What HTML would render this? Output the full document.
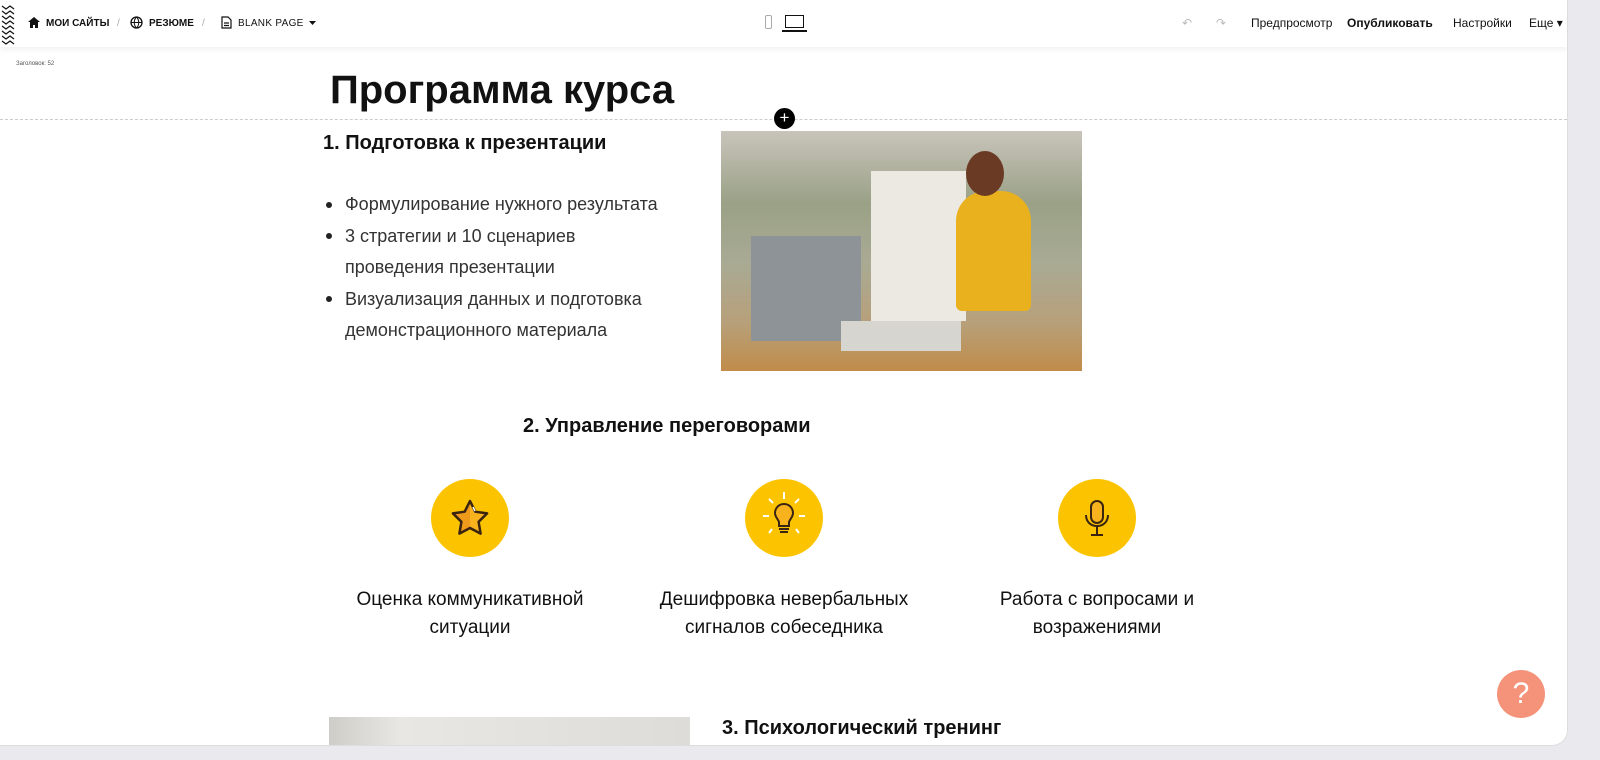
<!DOCTYPE html>
<html><head><meta charset="utf-8"><style>
*{margin:0;padding:0;box-sizing:border-box}
body{width:1600px;height:760px;background:#e9e9ee;font-family:"Liberation Sans","DejaVu Sans",sans-serif;color:#111;overflow:hidden;position:relative}
.frame{position:absolute;left:0;top:0;width:1568px;height:746px;background:#fff;border-radius:0 0 16px 0;border-right:1px solid #ddd;border-bottom:1px solid #ddd;overflow:hidden}
.top{position:absolute;left:0;top:0;width:100%;height:47px;background:#fff;box-shadow:0 2px 6px rgba(0,0,0,.07);z-index:5}
.t{position:absolute;font-size:10px;top:18px;white-space:nowrap}
.r{position:absolute;font-size:12px;top:16px;white-space:nowrap}
.abs{position:absolute;white-space:nowrap}
.circle{position:absolute;width:78px;height:78px;border-radius:50%;background:#fcc400}
.cap{position:absolute;width:300px;text-align:center;font-size:19px;line-height:28px;color:#111}
</style></head><body>
<div class="frame">
<div class="top">
 <svg class="abs" style="left:0;top:2px" width="18" height="44"><path d="M2 4l4 3 4-3 4 3M2 9l4 3 4-3 4 3M2 14l4 3 4-3 4 3M2 19l4 3 4-3 4 3M2 24l4 3 4-3 4 3M2 29l4 3 4-3 4 3M2 34l4 3 4-3 4 3M2 39l4 3 4-3 4 3" stroke="#111" fill="none" stroke-width="1.2"/></svg>
 <svg class="abs" style="left:28px;top:17px" width="12" height="11"><path d="M6 0L0 5h2v6h3V8h2v3h3V5h2z" fill="#111"/></svg>
 <div class="t" style="left:46px;font-weight:bold">МОИ САЙТЫ</div>
 <div class="t" style="left:117px;color:#aaa">/</div>
 <svg class="abs" style="left:130px;top:16px" width="13" height="13"><circle cx="6.5" cy="6.5" r="5.5" fill="none" stroke="#111" stroke-width="1.3"/><path d="M1 6.5h11M6.5 1c-3 3-3 8 0 11M6.5 1c3 3 3 8 0 11" stroke="#111" fill="none"/></svg>
 <div class="t" style="left:149px;font-weight:bold">РЕЗЮМЕ</div>
 <div class="t" style="left:202px;color:#aaa">/</div>
 <svg class="abs" style="left:221px;top:16px" width="11" height="13"><path d="M1 1h6l3 3v8H1z M3 7h5M3 9.5h5" stroke="#111" fill="none" stroke-width="1.2"/></svg>
 <div class="t" style="left:238px;letter-spacing:.3px">BLANK PAGE</div>
 <svg class="abs" style="left:309px;top:21px" width="7" height="4"><path d="M0 0h7L3.5 4z" fill="#111"/></svg>
 <div class="abs" style="left:765px;top:15px;width:7px;height:14px;border:1px solid #aaa;border-radius:2px"></div>
 <div class="abs" style="left:785px;top:15px;width:19px;height:13px;border:1.5px solid #111"></div>
 <div class="abs" style="left:782px;top:30px;width:25px;height:1.5px;background:#111"></div>
 <div class="r" style="left:1182px;color:#bbb">↶</div>
 <div class="r" style="left:1216px;color:#bbb">↷</div>
 <div class="r" style="left:1251px">Предпросмотр</div>
 <div class="r" style="left:1347px;font-weight:bold">Опубликовать</div>
 <div class="r" style="left:1453px">Настройки</div>
 <div class="r" style="left:1529px">Еще ▾</div>
</div>
<div class="abs" style="left:16px;top:61px;font-size:6px;color:#555">Заголовок: 52</div>
<div class="abs" style="left:0;top:119px;width:100%;border-top:1px dashed #ccc"></div>
<div class="abs" style="left:330px;top:68px;font-size:40px;font-weight:bold">Программа курса</div>
<div class="abs" style="left:774px;top:108px;width:21px;height:21px;border-radius:50%;background:#000;color:#fff;text-align:center;font-size:17px;line-height:20px">+</div>
<div class="abs" style="left:323px;top:132px;font-size:20px;font-weight:bold">1. Подготовка к презентации</div>
<div class="abs" style="left:345px;top:189px;font-size:18px;line-height:31.5px;color:#333">
 <div>Формулирование нужного результата</div>
 <div>3 стратегии и 10 сценариев<br>проведения презентации</div>
 <div>Визуализация данных и подготовка<br>демонстрационного материала</div>
</div>
<div class="abs" style="left:326px;top:202px;width:6px;height:6px;border-radius:50%;background:#222"></div>
<div class="abs" style="left:326px;top:233px;width:6px;height:6px;border-radius:50%;background:#222"></div>
<div class="abs" style="left:326px;top:296px;width:6px;height:6px;border-radius:50%;background:#222"></div>
<div class="abs" style="left:721px;top:131px;width:361px;height:240px;background:linear-gradient(180deg,#c9c4bb 0%,#9aa186 30%,#a9aa94 55%,#b7a07a 80%,#c08c4a 100%)">
 <div class="abs" style="left:30px;top:105px;width:110px;height:105px;background:#8d9396"></div>
 <div class="abs" style="left:150px;top:40px;width:95px;height:150px;background:#ebe9e2"></div>
 <div class="abs" style="left:235px;top:60px;width:75px;height:120px;background:#eab11f;border-radius:30px 30px 6px 6px"></div>
 <div class="abs" style="left:245px;top:20px;width:38px;height:45px;background:#6b3a24;border-radius:50%"></div>
 <div class="abs" style="left:120px;top:190px;width:120px;height:30px;background:#d7d5d0"></div>
</div>
<div class="abs" style="left:523px;top:415px;font-size:20px;font-weight:bold">2. Управление переговорами</div>
<div class="circle" style="left:431px;top:479px"></div>
<svg class="abs" style="left:431px;top:479px" width="78" height="78"><path d="M39 22L44.3 32.7 56.1 34.4 47.6 42.8 49.6 54.6 39 49 28.4 54.6 30.4 42.8 21.9 34.4 33.7 32.7Z" fill="#f7b21e"/><path d="M39 22L33.7 32.7 21.9 34.4 30.4 42.8 28.4 54.6 39 49Z" fill="#f09a1c"/><path d="M39 22L44.3 32.7 56.1 34.4 47.6 42.8 49.6 54.6 39 49 28.4 54.6 30.4 42.8 21.9 34.4 33.7 32.7Z" fill="none" stroke="#3a2410" stroke-width="2.5" stroke-linejoin="round"/><path d="M42 28l2 4" stroke="#fff" stroke-width="1.5"/></svg>
<div class="circle" style="left:745px;top:479px"></div>
<svg class="abs" style="left:745px;top:479px" width="78" height="78"><path d="M39 13v7M24 20l4 4M54 20l-4 4M18 37h6M54 37h6M27 50l-3 4M51 50l3 4" stroke="#fff" stroke-width="2"/><path d="M39 25c-6 0-9 5-9 9 0 4 3 6 4 9v4h10v-4c1-3 4-5 4-9 0-4-3-9-9-9z" fill="#f7b21e" stroke="#3a2410" stroke-width="2"/><path d="M34 50h10M35 53h8" stroke="#3a2410" stroke-width="2"/></svg>
<div class="circle" style="left:1058px;top:479px"></div>
<svg class="abs" style="left:1058px;top:479px" width="78" height="78"><rect x="33" y="22" width="12" height="22" rx="6" fill="#f7b21e" stroke="#3a2410" stroke-width="2"/><path d="M28 36c0 7 5 11 11 11s11-4 11-11M39 47v8M33 56h12" stroke="#3a2410" stroke-width="2" fill="none"/></svg>
<div class="cap" style="left:320px;top:586px">Оценка коммуникативной<br>ситуации</div>
<div class="cap" style="left:634px;top:586px">Дешифровка невербальных<br>сигналов собеседника</div>
<div class="cap" style="left:947px;top:586px">Работа с вопросами и<br>возражениями</div>
<div class="abs" style="left:329px;top:717px;width:361px;height:40px;background:linear-gradient(90deg,#cfcdc8,#e9e7e3 20%,#dedcd8)"></div>
<div class="abs" style="left:722px;top:717px;font-size:20px;font-weight:bold">3. Психологический тренинг</div>
<div class="abs" style="left:1497px;top:670px;width:48px;height:48px;border-radius:50%;background:#f5937a;color:#fff;text-align:center;font-size:30px;line-height:48px;font-weight:300">?</div>
</div>
</body></html>
